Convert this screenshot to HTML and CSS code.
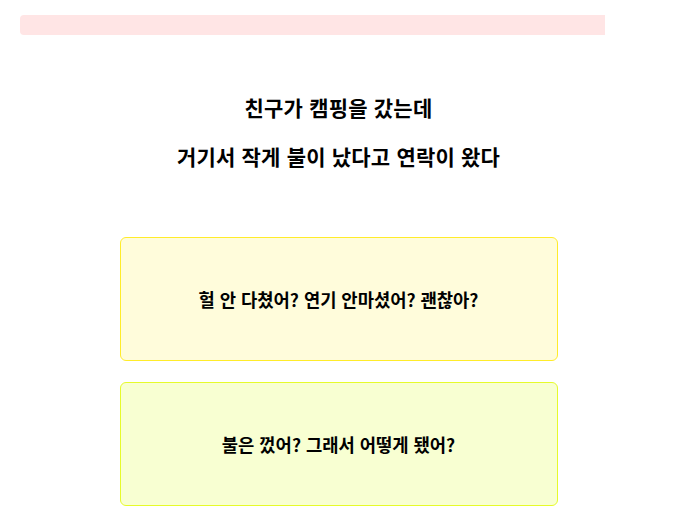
FILE: index.html
```html
<!DOCTYPE html>
<html lang="ko">
<head>
<meta charset="utf-8">
<title>Quiz</title>
<link rel="stylesheet" href="styles.css">
</head>
<body>
<div class="page">
  <div class="progress">
    <div class="progress-fill" style="width: 91.84%"></div>
  </div>
  <div class="question">
    <p class="question-line">친구가 캠핑을 갔는데</p>
    <p class="question-line">거기서 작게 불이 났다고 연락이 왔다</p>
  </div>
  <div class="answers">
    <button class="answer answer-a">헐 안 다쳤어? 연기 안마셨어? 괜찮아?</button>
    <button class="answer answer-b">불은 껐어? 그래서 어떻게 됐어?</button>
  </div>
</div>
</body>
</html>
```

FILE: styles.css
```css
* { box-sizing: border-box; }
html, body {
  margin: 0;
  padding: 0;
  background: #ffffff;
}
body {
  font-family: "Noto Sans CJK KR", "Noto Sans", sans-serif;
  color: #000000;
}
.page {
  padding: 15px 16px 0 20px;
  display: flex;
  flex-direction: column;
  align-items: center;
}
.progress {
  width: 100%;
  height: 20px;
}
.progress-fill {
  height: 20px;
  background: #ffe5e5;
  border-radius: 4px 0 0 4px;
}
.question {
  margin-top: 48px;
  text-align: center;
}
.question-line {
  margin: 0;
  font-size: 21px;
  letter-spacing: 0.2px;
  font-weight: 700;
  line-height: 49px;
}
.answers {
  margin-top: 56px;
  width: 438px;
  display: flex;
  flex-direction: column;
  gap: 21px;
}
.answer {
  height: 124px;
  border-radius: 6px;
  font-family: inherit;
  font-size: 17.7px;
  font-weight: 700;
  color: #000000;
  display: flex;
  align-items: center;
  justify-content: center;
  padding: 0;
}
.answer-a {
  background: #fffcdb;
  border: 1px solid #ffec2a;
}
.answer-b {
  background: #f8ffd2;
  border: 1px solid #e6fb2a;
}
```
